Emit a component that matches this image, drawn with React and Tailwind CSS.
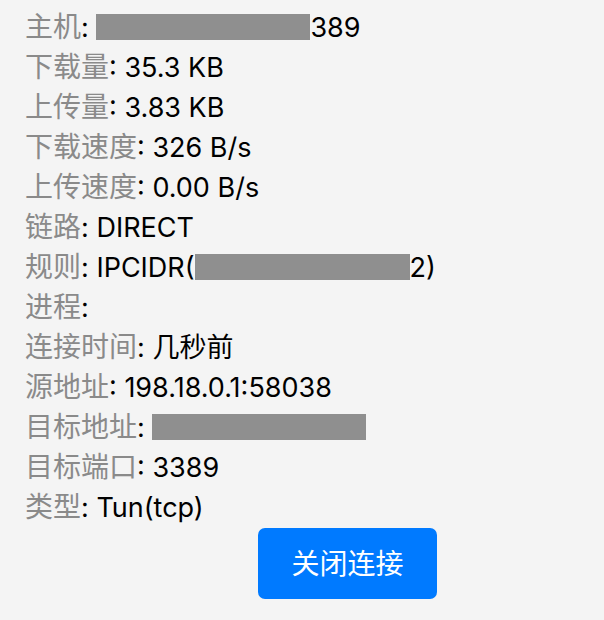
import React from 'react';

const Redact = ({ w }) => (
    <span className={`inline-block h-[26px] align-[-3px] bg-[#8f8f8f] ${w}`} />
);

const rows = [
    { label: '主机', value: <><Redact w="w-[214px]" />389</> },
    { label: '下载量', value: '35.3 KB' },
    { label: '上传量', value: '3.83 KB' },
    { label: '下载速度', value: '326 B/s' },
    { label: '上传速度', value: '0.00 B/s' },
    { label: '链路', value: 'DIRECT' },
    { label: '规则', value: <>IPCIDR(<Redact w="w-[215px]" />2)</> },
    { label: '进程', value: '' },
    { label: '连接时间', value: '几秒前' },
    { label: '源地址', value: '198.18.0.1:58038' },
    { label: '目标地址', value: <Redact w="w-[214px]" /> },
    { label: '目标端口', value: '3389' },
    { label: '类型', value: 'Tun(tcp)' },
];

const App = () => {
    return (
        <div
            className="min-h-[620px] w-[604px] bg-[#f4f4f4] px-[25px] pt-[7px] text-[27px] leading-[40px] text-black"
            style={{ fontFamily: 'Inter, "Noto Sans CJK SC", sans-serif' }}
        >
            {rows.map((r) => (
                <div key={r.label} className="h-[40px] whitespace-nowrap">
                    <span className="text-[28px] text-[#8a8a8a]">{r.label}</span>: {r.value}
                </div>
            ))}
            <button className="ml-[233px] mt-px h-[71px] w-[179px] rounded-[7px] bg-[#007aff] text-[28px] text-white">
                关闭连接
            </button>
        </div>
    );
};

export default App;
